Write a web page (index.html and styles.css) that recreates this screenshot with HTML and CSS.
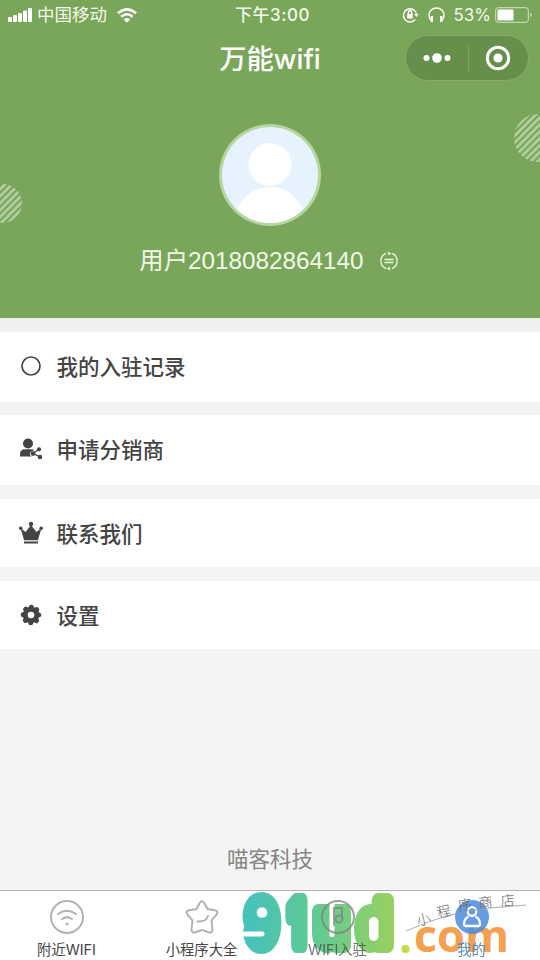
FILE: index.html
```html
<!DOCTYPE html>
<html lang="zh-CN">
<head>
<meta charset="utf-8">
<title>万能wifi</title>
<link rel="stylesheet" href="styles.css">
</head>
<body>
<div class="app">
  <header class="hero">
    <div class="status">
      <div class="status-left">
        <svg width="24" height="14" viewBox="0 0 24 14" fill="#fff"><rect x="0" y="9" width="4" height="5" rx="1"/><rect x="5" y="7" width="4" height="7" rx="1"/><rect x="10" y="5" width="4" height="9" rx="1"/><rect x="15" y="2.500" width="4" height="11.500" rx="1"/><rect x="20" y="0" width="4" height="14" rx="1"/></svg>
        <span class="carrier">中国移动</span>
        <svg class="wifi" width="20" height="15" viewBox="0 0 20 15" fill="none" stroke="#fff" stroke-width="2.600"><path d="M.9 5.200Q10-2.600 19.100 5.200M4.200 8.700Q10 3.800 15.800 8.700"/><path d="M6.700 11.300Q10 8.500 13.300 11.300L10 14.700Z" fill="#fff" stroke="none"/></svg>
      </div>
      <div class="time">下午3:00</div>
      <div class="status-right">
        <svg width="17" height="16" viewBox="0 0 17 16" fill="none" stroke="#fff" stroke-width="1.400"><path d="M13.200 12.500A6.600 6.600 0 1 1 14.600 7.500"/><path d="M12.300 7h4.400l-2.200 3z" fill="#fff" stroke="none"/><rect x="5.200" y="7" width="5.600" height="4.500" fill="#fff" stroke="none"/><path d="M6.300 7V5.500a1.700 1.700 0 0 1 3.400 0V7"/></svg>
        <svg width="17" height="16" viewBox="0 0 17 16" fill="none" stroke="#fff" stroke-width="1.400"><path d="M3 13.500Q1 11.500 1 8a7.500 7 0 0 1 15 0q0 3.500-2 5.500"/><path d="M3.800 9v6M13.200 9v6" stroke-width="2.400"/></svg>
        <span class="percent">53%</span>
        <svg width="38" height="16" viewBox="0 0 38 16" fill="none"><rect x=".7" y=".7" width="32.600" height="14.600" rx="2.500" stroke="#d3e4c5"/><rect x="2.500" y="2.500" width="16" height="11" rx="1" fill="#fff"/><path d="M35.300 5.500q3 2.500 0 5z" fill="#d3e4c5"/></svg>
      </div>
    </div>
    <div class="titlebar">
      <h1>万能wifi</h1>
      <div class="capsule">
        <svg width="28" height="12" viewBox="0 0 28 12" fill="#fff"><circle cx="3.500" cy="6" r="3"/><circle cx="14" cy="6" r="4.800"/><circle cx="24.500" cy="6" r="3"/></svg>
        <i></i>
        <svg width="26" height="26" viewBox="0 0 26 26"><circle cx="13" cy="13" r="10.700" fill="none" stroke="#fff" stroke-width="3"/><circle cx="13" cy="13" r="4.600" fill="#fff"/></svg>
      </div>
    </div>
    <div class="avatar">
      <svg width="96" height="96" viewBox="0 0 96 96"><circle cx="48" cy="48" r="48" fill="#e6f3fe"/><circle cx="48" cy="37.500" r="21.500" fill="#fff"/><path d="M15 82Q26 60 48 60T81 82Q68 96 48 96T15 82Z" fill="#fff"/></svg>
    </div>
    <div class="user">
      <span>用户2018082864140</span>
      <svg width="20" height="20" viewBox="0 0 20 20" fill="none" stroke="#eaf6dd" stroke-width="1.300"><path d="M7 17.600A8.200 8.200 0 0 1 7 2.400M13 2.400A8.200 8.200 0 0 1 13 17.600M5.500 8.500h9M5.500 11.500h9"/><path d="M8.500.5l4 1.900-3 2zM11.500 19.500l-4-1.900 3-2z" fill="#eaf6dd" stroke="none"/></svg>
    </div>
    <div class="stripes stripes-right"></div>
    <div class="stripes stripes-left"></div>
  </header>

  <main class="menu">
    <a class="row tall"><svg width="24" height="24" viewBox="0 0 24 24"><circle cx="12" cy="12" r="9" fill="none" stroke="#444" stroke-width="1.700"/></svg><span>我的入驻记录</span></a>
    <a class="row tall second"><svg width="24" height="24" viewBox="0 0 24 24" fill="#444"><circle cx="9" cy="6.500" r="5"/><path d="M1 19.500V17q0-4.800 5-4.800h6q2.500 0 3 1.300-5 1.500-4 4 .3 1.300 1.600 2z"/><circle cx="14" cy="16.600" r="2.300"/><circle cx="20" cy="12.300" r="2.100"/><circle cx="21" cy="20" r="2.200"/><path d="M20 12.500l-6 4 7 3.300" fill="none" stroke="#444" stroke-width="1.300"/></svg><span>申请分销商</span></a>
    <a class="row third"><svg width="24" height="24" viewBox="0 0 24 24" fill="#444"><path d="M1.500 7l5 4L12 4l5.500 7 5-4-3.600 12.200H5.100z"/><circle cx="12" cy="3" r="2.200"/><circle cx="1.800" cy="7.200" r="1.800"/><circle cx="22.200" cy="7.200" r="1.800"/><rect x="5" y="20.500" width="14" height="2"/></svg><span>联系我们</span></a>
    <a class="row fourth"><svg width="24" height="24" viewBox="0 0 24 24"><circle cx="12" cy="12" r="5.800" fill="none" stroke="#444" stroke-width="5"/><circle cx="12" cy="12" r="7.800" fill="none" stroke="#444" stroke-width="5" stroke-linecap="round" stroke-dasharray=".1 6.026"/></svg><span>设置</span></a>
  </main>

  <footer class="company">喵客科技</footer>

  <nav class="tabs">
    <svg class="watermark" width="300" height="70" viewBox="240 890 300 70">
      <defs><linearGradient id="brand" gradientUnits="userSpaceOnUse" x1="243" y1="0" x2="393" y2="0"><stop offset="0" stop-color="#45c1bd"/><stop offset=".5" stop-color="#62cb91"/><stop offset="1" stop-color="#98d061"/></linearGradient>
      <mask id="holes" maskUnits="userSpaceOnUse" x="240" y="890" width="300" height="70"><rect x="240" y="890" width="300" height="70" fill="#fff"/><g fill="#000"><circle cx="262" cy="912.500" r="5.300"/><rect x="236" y="931.500" width="28.500" height="5" rx="2.500"/><rect x="329.500" y="899" width="5" height="38" rx="2.500"/><rect x="369" y="917" width="9.500" height="24" rx="4.700"/></g></mask></defs>
      <g class="brand" mask="url(#holes)">
        <text x="247" y="945" textLength="30" lengthAdjust="spacingAndGlyphs">9</text>
        <text x="288.500" y="945" textLength="16" lengthAdjust="spacingAndGlyphs">1</text>
        <text x="316" y="945" textLength="31" lengthAdjust="spacingAndGlyphs">u</text>
        <text x="359" y="945" textLength="31" lengthAdjust="spacingAndGlyphs">d</text>
      </g>
      <circle cx="405.500" cy="949" r="4" fill="#c4dc3e"/>
      <text class="com" x="414" y="952" textLength="95" lengthAdjust="spacingAndGlyphs">com</text>
    </svg>
    <a class="tab"><svg width="36" height="36" viewBox="0 0 36 36" fill="none" stroke="#b2b2b2" stroke-width="2" stroke-linecap="round"><circle cx="18" cy="18" r="16"/><path d="M9 15Q18 8.500 27 15M13 20Q18 16.300 23 20"/><circle cx="18" cy="25" r="1.500" fill="#b2b2b2" stroke="none"/></svg><span>附近WIFI</span></a>
    <a class="tab"><svg width="36" height="36" viewBox="0 0 36 36" fill="none" stroke="#b2b2b2" stroke-width="2" stroke-linecap="round" stroke-linejoin="round"><path d="M15.700 4Q18 .7 20.300 4l3.200 6 7.500 1.200q4 1.400 1.500 4.500l-5 5.800 1 9q-.3 4-4 2.700L18 31l-6.500 2.200q-3.700 1.300-4-2.700l1-9-5-5.800q-2.500-3.100 1.500-4.500L12.500 10zM13.500 22.500Q22 23 24 17"/></svg><span>小程序大全</span></a>
    <a class="tab covered"><svg width="36" height="36" viewBox="0 0 36 36" fill="none" stroke="#808080" stroke-width="2" stroke-linecap="round"><circle cx="18" cy="18" r="16"/><circle cx="19" cy="20" r="3.500"/><path d="M14 26V9h8v11"/></svg><span>WIFI入驻</span></a>
    <a class="tab active"><svg width="36" height="36" viewBox="0 0 36 36"><circle cx="18" cy="18" r="17" fill="#508fe0"/><g fill="none" stroke="#fff" stroke-width="2.300"><circle cx="18" cy="12.500" r="4.300"/><path d="M14.500 17.500Q10 20 10 25q0 2 2 2h12q2 0 2-2 0-5-4.500-7.500"/></g></svg><span>我的</span></a>
    <svg class="script" width="140" height="50" viewBox="400 890 140 50">
      <path d="M406 931Q450 911 490 908L526 905" fill="none" stroke="#999" stroke-width=".8"/>
      <text transform="translate(418 926) rotate(-14)">小</text><text transform="translate(438 918) rotate(-12)">程</text><text transform="translate(459 911) rotate(-10)">序</text><text transform="translate(479 908) rotate(-6)">商</text><text transform="translate(501 906) rotate(-4)">店</text>
    </svg>
  </nav>
</div>
</body>
</html>
```
FILE: styles.css
```css
* { box-sizing: border-box; }
body { margin: 0; background: #f4f4f4; font-family: "Liberation Sans", "Noto Sans CJK SC", sans-serif; }
.app { width: 540px; height: 960px; overflow: hidden; display: flex; flex-direction: column; }
svg { display: block; flex: none; }
.hero { position: relative; height: 318px; flex: none; background: #7aa65b; color: #fff; overflow: hidden; display: flex; flex-direction: column; align-items: center; }
.status { width: 100%; height: 30px; padding: 0 7px 0 8px; display: grid; grid-template-columns: 1fr auto 1fr; align-items: center; font: 17px/30px Inter, "Noto Sans CJK SC", sans-serif; color: #f3faeb; }
.status-left, .status-right { display: flex; align-items: center; }
.carrier { margin-left: 5px; font-size: 17.500px; }
.wifi { margin-left: 10px; }
.time { font-weight: 500; letter-spacing: .5px; padding-left: 4px; }
.status-right { justify-content: flex-end; gap: 8px; }
.status-right svg:first-child { margin-right: 1px; }
.percent { margin-right: -4px; font-size: 17px; }
.titlebar { width: 100%; height: 57px; padding: 5px 11px 0; display: grid; grid-template-columns: 124px 1fr 124px; align-items: start; }
h1 { grid-column: 2; margin: 4px 0 0; text-align: center; font: 500 27.300px/42px Inter, "Noto Sans CJK SC", sans-serif; }
.capsule { width: 124px; height: 46px; border: 1px solid #87ab6b; border-radius: 23px; background: #678f4c; display: flex; align-items: center; justify-content: space-between; padding: 0 17px; }
.capsule i { width: 1px; height: 27px; background: #7e9f68; }
.avatar { width: 102px; height: 102px; margin-top: 37px; padding: 3px; border-radius: 50%; background: #b5d6a0; }
.user { display: flex; align-items: center; gap: 15px; margin-top: 17px; height: 36px; padding-right: 2px; font-size: 24.300px; line-height: 36px; color: #f0fae7; }
.stripes { position: absolute; border-radius: 50%; background: repeating-linear-gradient(135deg, #b0cd9c 0 2.200px, #7aa65b 2.800px 4.300px, #b0cd9c 4.900px); }
.stripes-right { width: 48px; height: 48px; left: 514px; top: 114px; }
.stripes-left { width: 39px; height: 39px; left: -17px; top: 184px; }
.menu { padding-top: 14px; flex: none; background: linear-gradient(#efefef, #f3f3f3 14px); }
.row { height: 68px; padding-left: 19px; display: flex; align-items: center; gap: 13.500px; background: #fff; color: #444; font: 500 21.500px/30px "Noto Sans CJK SC", sans-serif; }
.row span { margin-top: -1px; }
.tall { height: 70px; }
.tall svg, .tall span { margin-top: -2px; }
.second { margin-top: 13px; }
.third, .fourth { margin-top: 14px; }
.company { margin-top: auto; margin-bottom: 15px; height: 34px; text-align: center; color: #858585; font: 21.500px/34px "Noto Sans CJK SC", sans-serif; }
.tabs { position: relative; height: 70px; flex: none; border-top: 1px solid #b2b2b2; background: #fff; display: grid; grid-template-columns: repeat(4, 1fr); }
.tab { position: relative; z-index: 1; display: flex; flex-direction: column; align-items: center; padding: 8px 2px 0 0; color: #444; font: 14.300px/20px Inter, "Noto Sans CJK SC", sans-serif; }
.tab span { margin-top: 5px; white-space: nowrap; }
.covered { opacity: .75; padding-right: 0; }
.active { color: #3d7fc0; opacity: .88; }
.watermark { position: absolute; left: 240px; top: -1px; }
.brand { fill: url(#brand); stroke: url(#brand); stroke-width: 16px; stroke-linejoin: round; font: 900 60px Inter, sans-serif; }
.com { fill: #f3a04f; font: 700 45px "Open Sans", sans-serif; }
.script { position: absolute; z-index: 2; left: 400px; top: -1px; fill: #666; font: 300 14px "Noto Sans CJK SC", sans-serif; }
```
